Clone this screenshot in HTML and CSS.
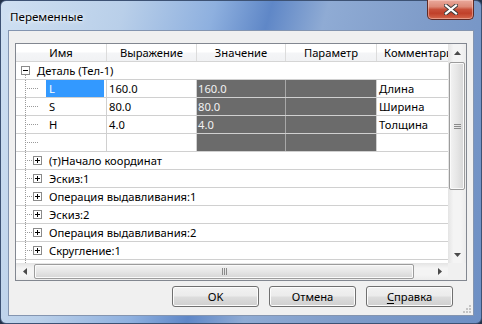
FILE: index.html
```
<!DOCTYPE html>
<html lang="ru">
<head>
  <meta charset="UTF-8" />
  <title>Переменные</title>
  <link rel="stylesheet" href="styles.css">
</head>
<body>
  <div class="window">
    <div class="titlebar">
      <span class="title">Переменные</span>
      <div class="close">
        <svg width="14" height="11" viewBox="0 0 14 11">
          <path d="M2 1.5 L12 9.5 M12 1.5 L2 9.5" stroke="#3a3a3a" stroke-width="4" stroke-linecap="square" fill="none"/>
          <path d="M2 1.5 L12 9.5 M12 1.5 L2 9.5" stroke="#fff" stroke-width="2.2" stroke-linecap="square" fill="none"/>
        </svg>
      </div>
    </div>

    <div class="client">
      <div class="grid">
        <div class="grid-main">
          <div class="table">
            <div class="head">
              <div class="hc w1">Имя</div>
              <div class="hc w2">Выражение</div>
              <div class="hc w3">Значение</div>
              <div class="hc w4">Параметр</div>
              <div class="hc w5">Комментарий</div>
            </div>
            <div class="body">
              <div class="row node root">
                <span class="tg"></span>
                <span class="label">Деталь (Тел-1)</span>
              </div>

              <div class="row var">
                <div class="c w1"><span class="guide long"></span><span class="name sel">L</span></div>
                <div class="c w2">160.0</div>
                <div class="c w3 dark">160.0</div>
                <div class="c w4 dark"></div>
                <div class="c w5">Длина</div>
              </div>
              <div class="row var">
                <div class="c w1"><span class="guide long"></span><span class="name">S</span></div>
                <div class="c w2">80.0</div>
                <div class="c w3 dark">80.0</div>
                <div class="c w4 dark"></div>
                <div class="c w5">Ширина</div>
              </div>
              <div class="row var">
                <div class="c w1"><span class="guide long"></span><span class="name">H</span></div>
                <div class="c w2">4.0</div>
                <div class="c w3 dark">4.0</div>
                <div class="c w4 dark"></div>
                <div class="c w5">Толщина</div>
              </div>
              <div class="row var">
                <div class="c w1"><span class="guide long"></span><span class="name"></span></div>
                <div class="c w2"></div>
                <div class="c w3 dark"></div>
                <div class="c w4 dark"></div>
                <div class="c w5"></div>
              </div>

              <div class="row node"><span class="guide"></span><span class="tg plus"></span><span class="label">(т)Начало координат</span></div>
              <div class="row node"><span class="guide"></span><span class="tg plus"></span><span class="label">Эскиз:1</span></div>
              <div class="row node"><span class="guide"></span><span class="tg plus"></span><span class="label">Операция выдавливания:1</span></div>
              <div class="row node"><span class="guide"></span><span class="tg plus"></span><span class="label">Эскиз:2</span></div>
              <div class="row node"><span class="guide"></span><span class="tg plus"></span><span class="label">Операция выдавливания:2</span></div>
              <div class="row node"><span class="guide"></span><span class="tg plus"></span><span class="label">Скругление:1</span></div>
              <div class="row node"><span class="guide"></span><span class="tg plus"></span></div>
            </div>
          </div>

          <div class="vscroll">
            <div class="sbtn">
              <svg width="7" height="4" viewBox="0 0 7 4"><path d="M0 4 L3.5 0 L7 4 Z" fill="#4a4a4a"/></svg>
            </div>
            <div class="vthumb"><span class="grip-v"></span></div>
            <div class="track"></div>
            <div class="sbtn">
              <svg width="7" height="4" viewBox="0 0 7 4"><path d="M0 0 L7 0 L3.5 4 Z" fill="#4a4a4a"/></svg>
            </div>
          </div>
        </div>

        <div class="hscroll">
          <div class="hbar">
            <div class="sbtn">
              <svg width="4" height="7" viewBox="0 0 4 7"><path d="M4 0 L4 7 L0 3.5 Z" fill="#4a4a4a"/></svg>
            </div>
            <div class="hthumb"><span class="grip-h"></span></div>
            <div class="track"></div>
            <div class="sbtn">
              <svg width="4" height="7" viewBox="0 0 4 7"><path d="M0 0 L4 3.5 L0 7 Z" fill="#4a4a4a"/></svg>
            </div>
          </div>
          <div class="corner"></div>
        </div>
      </div>

      <div class="buttons">
        <button class="btn">OK</button>
        <button class="btn">Отмена</button>
        <button class="btn"><u>С</u>правка</button>
      </div>

      <svg class="sizegrip" width="9" height="9" viewBox="0 0 9 9">
        <rect x="6" y="0" width="2" height="2" fill="#c4c4c4"/>
        <rect x="3" y="3" width="2" height="2" fill="#c4c4c4"/>
        <rect x="6" y="3" width="2" height="2" fill="#c4c4c4"/>
        <rect x="0" y="6" width="2" height="2" fill="#c4c4c4"/>
        <rect x="3" y="6" width="2" height="2" fill="#c4c4c4"/>
        <rect x="6" y="6" width="2" height="2" fill="#c4c4c4"/>
      </svg>
    </div>
  </div>
</body>
</html>
```

FILE: styles.css
```
* {
  box-sizing: border-box;
}
body {
  margin: 0;
  width: 482px;
  height: 324px;
  overflow: hidden;
  background: #23324a;
  font-family: "Noto Sans", "Open Sans", sans-serif;
  font-size: 11.2px;
  color: #000;
}
.window {
  width: 482px;
  height: 324px;
  border: 1px solid #3d5274;
  border-radius: 6px;
  padding: 0 7px 7px 7px;
  display: flex;
  flex-direction: column;
  background: linear-gradient(105deg, #cfe0f2 0%, #b9cfe9 22%, #8eb0df 38%, #5f87c7 48%, #8fabd4 58%, #7f9cc9 76%, #6d8fc4 100%);
}
.titlebar {
  height: 29px;
  display: flex;
  align-items: flex-start;
  justify-content: space-between;
}
.title {
  margin: 8px 0 0 2px;
  line-height: 16px;
  font-size: 11.6px;
  text-shadow: 0 0 6px rgba(255, 255, 255, 0.9), 0 0 3px rgba(255, 255, 255, 0.9);
}
.close {
  width: 47px;
  height: 20px;
  margin-top: -1px;
  border: 1px solid #5e2a25;
  border-top: none;
  border-radius: 0 0 5px 5px;
  background: linear-gradient(#eaa99c 0%, #dd8a78 35%, #c8503a 50%, #c0402a 70%, #d4674c 100%);
  box-shadow: inset 0 0 0 1px rgba(255, 220, 210, 0.45);
  display: flex;
  align-items: center;
  justify-content: center;
}

/* client area */
.client {
  flex: 1;
  position: relative;
  background: #f0f0f0;
  border: 1px solid #8495b0;
  padding: 12px 6px 0 6px;
  display: flex;
  flex-direction: column;
}
.grid {
  height: 238px;
  border: 1px solid #828790;
  background: #fff;
  display: flex;
  flex-direction: column;
}
.grid-main {
  height: 219px;
  display: flex;
}
.table {
  width: 432px;
  overflow: hidden;
}
.head {
  width: 452px;
  height: 18px;
  display: flex;
  border-bottom: 1px solid #d5d5d5;
  background: linear-gradient(#ffffff 0%, #ffffff 45%, #f4f5f7 55%, #f1f2f4 100%);
}
.hc {
  flex: none;
  text-align: center;
  line-height: 17px;
  border-right: 1px solid #dcdcdc;
  white-space: nowrap;
  overflow: hidden;
}
.w1 { width: 91px; }
.w2 { width: 90px; }
.w3 { width: 89px; }
.w4 { width: 91px; }
.w5 { width: 91px; }

.body {
  width: 452px;
}
.row {
  height: 18px;
  display: flex;
  align-items: center;
  border-bottom: 1px solid #d0d0d0;
  white-space: nowrap;
}
.label {
  line-height: 17px;
}

/* tree */
.tg {
  flex: none;
  width: 9px;
  height: 9px;
  border: 1px solid #8a8a8a;
  background: linear-gradient(#000, #000) center / 5px 1px no-repeat, #fff;
}
.tg.plus {
  background: linear-gradient(#000, #000) center / 5px 1px no-repeat,
              linear-gradient(#000, #000) center / 1px 5px no-repeat, #fff;
}
.root {
  padding-left: 5px;
  background: repeating-linear-gradient(to bottom, #9a9a9a 0 1px, transparent 1px 2px) 9px 13px / 1px 5px no-repeat;
}
.root .label {
  margin-left: 6px;
}
.guide {
  flex: none;
  align-self: stretch;
  margin-left: 9px;
  width: 8px;
  background: repeating-linear-gradient(to bottom, #9a9a9a 0 1px, transparent 1px 2px) left top / 1px 100% no-repeat,
              repeating-linear-gradient(to right, #9a9a9a 0 1px, transparent 1px 2px) left 8px / 100% 1px no-repeat;
}
.guide.long {
  width: 13px;
}
.node .label {
  margin-left: 7px;
}
.var {
  align-items: stretch;
}
.c {
  flex: none;
  display: flex;
  align-items: center;
  padding-left: 2px;
  border-right: 1px solid #d0d0d0;
  overflow: hidden;
}
.c.w1 {
  padding-left: 0;
}
.c.w5 {
  border-right: none;
}
.dark {
  background: #6b6b6b;
  color: #f2f2f2;
  padding-left: 1px;
}
.c.w3.dark {
  border-right-color: #a8a8a8;
}
.name {
  margin-left: 8px;
  width: 58px;
  height: 100%;
  padding-left: 3px;
  display: flex;
  align-items: center;
}
.name.sel {
  background: #3399ff;
  color: #fff;
}

/* scrollbars */
.vscroll {
  width: 18px;
  display: flex;
  flex-direction: column;
  background: linear-gradient(to right, #e4e4e4, #f4f4f4 30%, #f4f4f4 70%, #ececec);
}
.sbtn {
  flex: none;
  width: 17px;
  height: 17px;
  display: flex;
  align-items: center;
  justify-content: center;
}
.vscroll .sbtn {
  width: 18px;
}
.vthumb {
  flex: none;
  height: 128px;
  margin: 1px 1px 0 1px;
  border: 1px solid #9c9c9c;
  border-radius: 2px;
  background: linear-gradient(to right, #f3f3f3, #e6e6e6 50%, #d6d6d6);
  box-shadow: inset 0 0 0 1px #fafafa;
  display: flex;
  align-items: center;
  justify-content: center;
}
.grip-v {
  width: 7px;
  height: 5px;
  background: repeating-linear-gradient(to bottom, #8a8a8a 0 1px, transparent 1px 2px);
}
.track {
  flex: 1;
}
.hscroll {
  height: 17px;
  display: flex;
}
.hbar {
  width: 432px;
  display: flex;
  background: linear-gradient(#e4e4e4, #f4f4f4 30%, #f4f4f4 70%, #ececec);
}
.hthumb {
  flex: none;
  width: 380px;
  margin: 1px 0 0 1px;
  height: 15px;
  border: 1px solid #9c9c9c;
  border-radius: 2px;
  background: linear-gradient(#f3f3f3, #e6e6e6 50%, #d6d6d6);
  box-shadow: inset 0 0 0 1px #fafafa;
  display: flex;
  align-items: center;
  justify-content: center;
}
.grip-h {
  width: 5px;
  height: 7px;
  background: repeating-linear-gradient(to right, #8a8a8a 0 1px, transparent 1px 2px);
}
.corner {
  width: 18px;
  background: #f0f0f0;
}

/* buttons */
.buttons {
  margin-top: 5px;
  padding-right: 14px;
  display: flex;
  justify-content: flex-end;
  gap: 10px;
}
.btn {
  width: 87px;
  height: 21px;
  padding: 0;
  border: 1px solid #707070;
  border-radius: 3px;
  background: linear-gradient(#f2f2f2 0%, #ebebeb 48%, #dddddd 52%, #cfcfcf 100%);
  box-shadow: inset 0 0 0 1px #fcfcfc;
  font-family: "Noto Sans", "Open Sans", sans-serif;
  font-size: 11.2px;
  color: #000;
  line-height: 17px;
}
.btn u {
  text-underline-offset: 2px;
}
.sizegrip {
  position: absolute;
  right: 1px;
  bottom: 1px;
}
```
